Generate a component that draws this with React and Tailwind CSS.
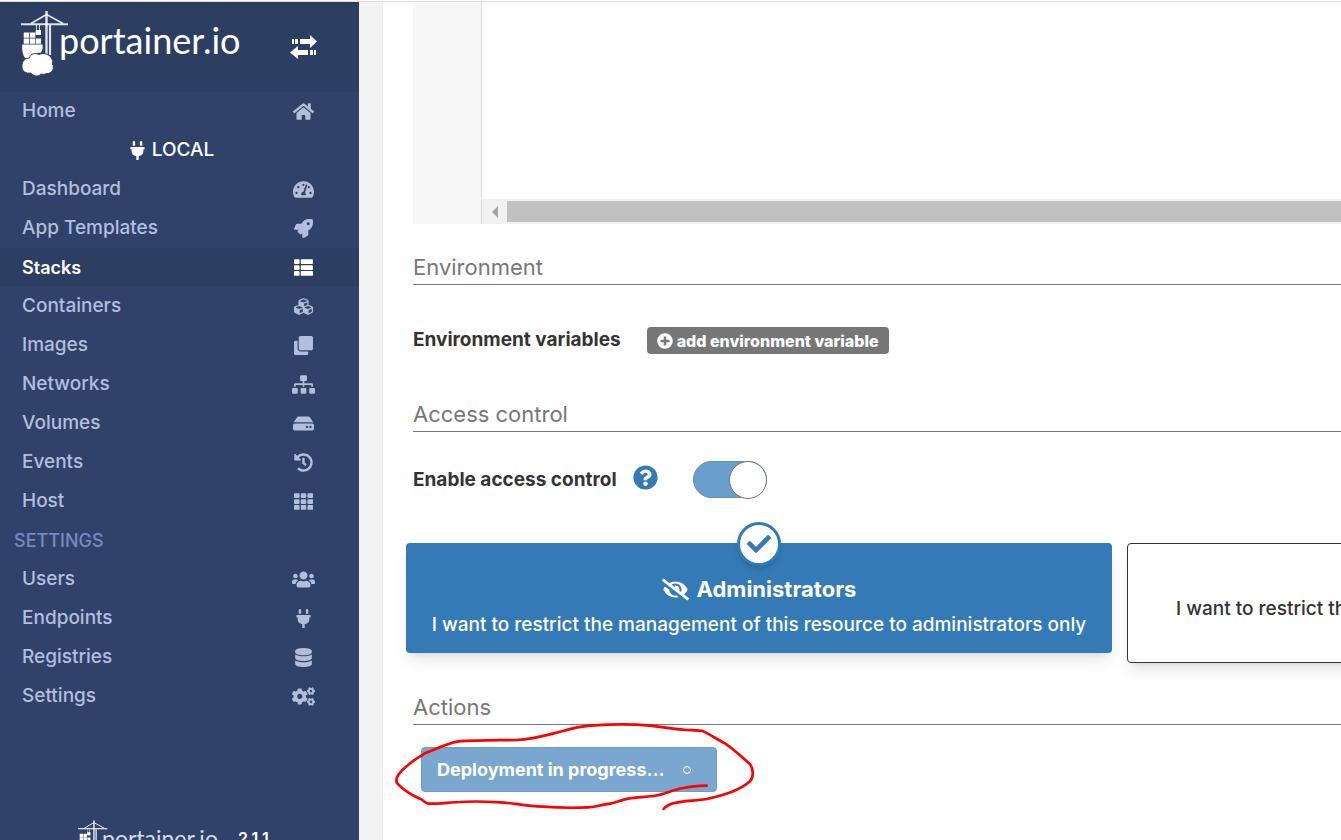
import React from 'react';
import clsx from 'clsx';
import {
  FaHome,
  FaPlug,
  FaTachometerAlt,
  FaRocket,
  FaThList,
  FaCubes,
  FaClone,
  FaSitemap,
  FaHdd,
  FaHistory,
  FaTh,
  FaUsers,
  FaDatabase,
  FaCogs,
  FaPlusCircle,
  FaQuestionCircle,
  FaEyeSlash,
  FaCheck,
} from 'react-icons/fa';

const endpointLinks = [
  { label: 'Dashboard', icon: FaTachometerAlt, size: 21 },
  { label: 'App Templates', icon: FaRocket, size: 19 },
  { label: 'Stacks', icon: FaThList, size: 19, active: true },
  { label: 'Containers', icon: FaCubes, size: 19 },
  { label: 'Images', icon: FaClone, size: 19 },
  { label: 'Networks', icon: FaSitemap, size: 23 },
  { label: 'Volumes', icon: FaHdd, size: 21 },
  { label: 'Events', icon: FaHistory, size: 19 },
  { label: 'Host', icon: FaTh, size: 19 },
];

const settingsLinks = [
  { label: 'Users', icon: FaUsers, size: 23 },
  { label: 'Endpoints', icon: FaPlug, size: 19 },
  { label: 'Registries', icon: FaDatabase, size: 19 },
  { label: 'Settings', icon: FaCogs, size: 23 },
];

// Crane, containers and cloud
const CraneMark = ({ className }) => (
  <svg viewBox="0 0 48 66" className={className} fill="#fff" aria-hidden="true">
    <g stroke="#fff" fill="none" strokeOpacity="0.85">
      <path d="M0 13.3H47" strokeWidth="2" />
      <path d="M25.5 0V46" strokeWidth="2.4" />
      <path d="M10 12.5L25.5 3.5L42 12.5" strokeWidth="1.6" />
      <path d="M29 14V44" strokeWidth="2.2" />
      <path d="M15.5 14V20M18.5 14V20" strokeWidth="0.9" />
    </g>
    <rect x="14.7" y="19" width="5.3" height="5" />
    <path d="M2.7 21.5h5.6v5.3H2.7zM9 21.5h5.3v5.3H9zM2.7 27.5h5.6v5.3H2.7zM9 27.5h5.3v5.3H9zM15 27.5h5v5.3h-5z" />
    <path d="M1.3 33.6H21.5C22.3 38 21 41 19 42C14 41 11 45 9.5 47H4C1.5 44 0.8 39 1.3 33.6Z" />
    {/* Cloud, outlined in the header colour so it stands off the ship */}
    <path
      stroke="#2d3e63"
      strokeWidth="1"
      d="M8.5 47C9.5 42.5 14 41.5 18 43.5C22 41.5 29 43 30.5 47.5C32.5 50 31.5 52 31.5 53C34 57 31 63 25.5 62.5C22.5 64 20 63 20 63C17 66.5 11.500 65 10 62C5 63 0.500 60 1 55C1 50 4 47 8.500 47Z"
    />
  </svg>
);

const TransferIcon = () => (
  <svg viewBox="0 0 28 24" className="w-7 h-6" fill="currentColor" aria-hidden="true">
    <path d="M2 4h2v5H2zM5 4h3v5H5zM10 4h10V0l7 6.5L20 13V9H10z" />
    <path d="M26 15h-2v5h2zM23 15h-3v5h3zM18 15H8v-4L0 17.5L8 24v-4h10z" />
  </svg>
);

const SidebarLink = ({ label, icon: Icon, size, active }) => (
  <li>
    <a
      href="#"
      className={clsx(
        'flex items-center justify-between h-[39px] pl-[22px] pr-11',
        active ? 'bg-[#2d3e63] text-white text-lg font-semibold' : 'text-[#b2bfdc]'
      )}
    >
      <span>{label}</span>
      <span className="flex justify-center w-6">
        <Icon size={size} />
      </span>
    </a>
  </li>
);

const Sidebar = () => (
  <aside className="flex flex-col shrink-0 w-[359px] bg-[#30426a] text-[19px] font-medium">
    <div className="flex items-center justify-between h-[90px] shrink-0 pl-[21px] pr-6 bg-[#2d3e63] text-white">
      <div className="flex items-center pb-1.5">
        <CraneMark className="w-12 h-[66px]" />
        <span className="-ml-2.5 -mt-2 font-[Lato] font-normal text-[36px] leading-10">portainer.io</span>
      </div>
      <button type="button" aria-label="Toggle sidebar" className="mr-[17px]">
        <TransferIcon />
      </button>
    </div>
    <ul>
      <SidebarLink label="Home" icon={FaHome} size={21} />
      <li className="flex items-center justify-center gap-[5px] h-[39px] pr-[17px] text-white">
        <FaPlug size={19} />
        LOCAL
      </li>
      {endpointLinks.map((link) => (
        <SidebarLink key={link.label} {...link} />
      ))}
      <li className="flex items-center h-[39px] pl-3.5 text-lg text-[#738bc0]">SETTINGS</li>
      {settingsLinks.map((link) => (
        <SidebarLink key={link.label} {...link} />
      ))}
    </ul>
    <div className="flex items-start mt-[104px] pl-[78px] text-white">
      <CraneMark className="w-[30px] h-[42px] shrink-0" />
      <span className="-ml-1.5 mt-1.5 font-[Lato] font-normal text-[23px] leading-6 opacity-80">portainer.io</span>
      <span className="ml-5 mt-1.5 text-base font-semibold">2.1.1</span>
    </div>
  </aside>
);

const SectionTitle = ({ children, className }) => (
  <h2 className={clsx('pb-1 border-b border-[#777] text-[22px] leading-[26px] text-[#777]', className)}>
    {children}
  </h2>
);

const Editor = () => (
  <div className="flex h-[222px] bg-white">
    <div className="w-[69px] shrink-0 bg-[#f7f7f7] border-r border-[#ddd]" />
    <div className="flex flex-col flex-1 justify-end">
      <div className="flex items-center h-[25px] bg-[#f1f1f1]">
        <span className="flex justify-center w-[25px]">
          <svg viewBox="0 0 6 12" className="w-1.5 h-3" fill="#a3a3a3" aria-hidden="true">
            <path d="M6 0V12L0 6Z" />
          </svg>
        </span>
        <div className="flex-1 h-[21px] bg-[#c1c1c1]" />
      </div>
    </div>
  </div>
);

const DeploymentMarker = () => (
  <svg
    viewBox="0 0 1140 420"
    className="absolute -left-[31px] -top-[57px] w-[380px] h-[140px] pointer-events-none"
    fill="none"
    stroke="#f00"
    strokeWidth="8"
    strokeLinecap="round"
    strokeLinejoin="round"
    aria-hidden="true"
  >
    <path d="M950 287C920 288 900 290 880 294C845 300 825 313 790 318C760 322 740 321 715 326C690 331 680 338 660 341C630 344 625 351 595 352C550 354 500 353 460 350C400 347 370 339 330 337C280 334 250 333 210 336C180 337 140 342 115 341C105 339 100 331 90 326C60 313 38 298 22 280C16 272 20 262 26 253C50 222 80 205 105 190C140 176 170 160 205 154C260 150 320 151 380 150C430 147 460 138 500 128C540 117 560 110 600 107C670 102 730 102 780 107C830 112 850 118 890 120C910 121 930 121 940 124C965 136 985 150 1005 160C1035 180 1055 202 1080 222C1090 236 1092 260 1080 274C1050 302 1000 315 950 327C910 333 880 332 850 340C835 345 826 350 821 357" />
  </svg>
);

const Content = () => (
  <main className="flex-1 min-w-0 pl-6 bg-[#f3f3f3] overflow-hidden">
    <div className="min-h-full pl-[30px] bg-white border-l border-[#eee] -ml-px">
      <Editor />

      <SectionTitle className="mt-[30px]">Environment</SectionTitle>
      <div className="flex items-center gap-[26px] mt-[42px] h-[27px] text-[19px] font-bold text-[#333]">
        <span>Environment variables</span>
        <button
          type="button"
          className="flex items-center gap-1 h-[27px] px-2.5 rounded bg-[#777] text-white text-base leading-5 font-extrabold"
        >
          <FaPlusCircle size={16} />
          add environment variable
        </button>
      </div>

      <SectionTitle className="mt-[47px]">Access control</SectionTitle>
      <div className="flex items-center mt-[29px] h-[38px] text-[19px] text-[#333]">
        <label htmlFor="access-control" className="font-bold">
          Enable access control
        </label>
        <FaQuestionCircle size={25} className="ml-4 mb-1.5 text-[#337ab7]" />
        <span className="relative ml-[35px] w-[74px] h-[38px]">
          <input
            id="access-control"
            type="checkbox"
            defaultChecked
            className="block appearance-none w-full h-[37px] rounded-full bg-[#6a9fcd] border border-[#5d8fbb]"
          />
          <span className="absolute right-0 top-0 w-[38px] h-[38px] rounded-full bg-white border border-[#777] pointer-events-none" />
        </span>
      </div>

      <div className="flex items-start gap-[15px] -ml-[7px] mt-11 h-[120px] text-[19px]">
        <label className="relative flex flex-col items-center shrink-0 w-[706px] h-[110px] pt-8 rounded bg-[#337ab7] text-white font-medium shadow-lg">
          <input type="radio" name="ownership" defaultChecked className="sr-only" />
          <span className="absolute -top-[21px] flex items-center justify-center w-11 h-11 rounded-full bg-white border-3 border-[#337ab7] text-[#337ab7] shadow-md">
            <FaCheck size={24} />
          </span>
          <span className="flex items-center gap-2 text-[22px] leading-7 font-bold">
            <FaEyeSlash size={27} />
            Administrators
          </span>
          <span className="mt-2 leading-7">
            I want to restrict the management of this resource to administrators only
          </span>
        </label>
        <label className="shrink-0 w-[706px] h-[120px] pt-[51px] px-12 rounded-sm bg-white border border-[#333] text-[#333] font-medium leading-7 whitespace-nowrap shadow-lg">
          <input type="radio" name="ownership" className="sr-only" />
          I want to restrict the management of this resource to a set of users
        </label>
      </div>

      <SectionTitle className="mt-[31px]">Actions</SectionTitle>
      <div className="relative ml-2 mt-[22px] w-fit">
        <button
          type="button"
          disabled
          className="flex items-center gap-[18px] h-[45px] pl-[15px] pr-[25px] rounded bg-[#7aa7d0] border border-[#6f9cc6] text-lg font-bold text-white"
        >
          Deployment in progress...
          <span className="w-2 h-2 rounded-full border border-white" />
        </button>
        <DeploymentMarker />
      </div>
    </div>
  </main>
);

const App = () => (
  <div className="flex flex-col h-screen overflow-hidden font-[Inter,sans-serif]">
    <div className="h-0.5 shrink-0 bg-white border-b border-[#dcdce0]" />
    <div className="flex flex-1 min-h-0 overflow-hidden">
      <Sidebar />
      <Content />
    </div>
  </div>
);

export default App;
